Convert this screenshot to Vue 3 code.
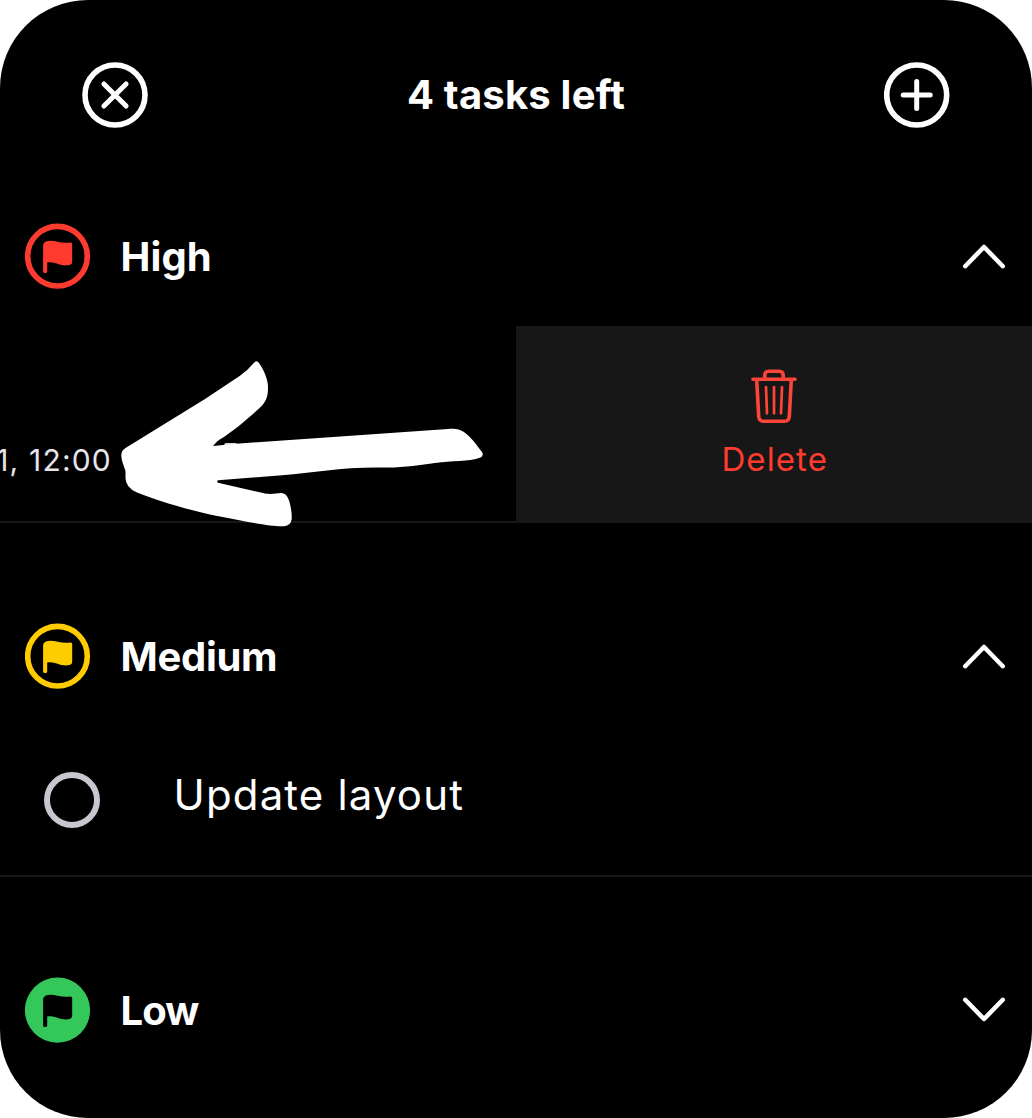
<script setup>
import { ref } from 'vue'

const flag = 'M43.1 272.3V246.2Q43.1 242.8 46 241.7C53 239 60 244.5 70.2 242.8Q72.2 242.5 72.2 244.3V261.8Q72.2 264.8 69.5 265.3C60 267.3 54.5 260.8 47.2 262.9V272.3Q47.2 273.4 45.2 273.4Q43.1 273.4 43.1 272.3Z'
const sections = ref([
  { name: 'High', color: '#ff3b30', open: true, kind: 'swiped' },
  { name: 'Medium', color: '#ffcc00', open: true, kind: 'task' },
  { name: 'Low', color: '#34c759', open: false, kind: 'none' },
])
</script>

<template>
  <main class="screen">
    <header class="topbar">
      <svg class="ring" viewBox="0 0 66 66">
        <circle cx="33" cy="33" r="30" />
        <path d="M21.9 21.9L44.1 44.1M44.1 21.9L21.9 44.1" />
      </svg>
      <h1>4 tasks left</h1>
      <svg class="ring" viewBox="0 0 66 66">
        <circle cx="32.7" cy="33" r="30" />
        <path d="M32.7 19.5V46.5M19.2 33H46.2" />
      </svg>
    </header>

    <section v-for="s in sections" :key="s.name">
      <div class="group">
        <svg class="badge" viewBox="25 223.3 66 66">
          <circle
            cx="57.5" cy="256.5" :r="s.open ? 29.8 : 32.6"
            :fill="s.open ? 'none' : s.color"
            :stroke="s.open ? s.color : 'none'" stroke-width="5.6"
          />
          <path :d="flag" :fill="s.open ? s.color : '#000'" />
        </svg>
        <h2 :class="s.name.toLowerCase()">{{ s.name }}</h2>
        <svg class="chevron" :class="{ down: !s.open }" viewBox="0 0 44 26">
          <path d="M3.2 23.2L22 4L40.8 23.2" />
        </svg>
      </div>

      <div v-if="s.kind === 'swiped'" class="swiped">
        <div class="content">
          <div class="time"><span>1, 12:00</span></div>
          <svg class="arrow" viewBox="110 350 390 190">
            <path fill="#dcdce0" d="M223 446L225.5 443H236L238 446Z" />
            <path
              fill="#fff"
              d="M125.5 448L205 399L240 375.8Q247 371 254 362.7Q256.7 359.5 259 363C265 372 268 380 268 388C268 398 265 403 259 408.5C247 419 235 430 219 440Q216 442 213 445.9L236 443.7L448 429C462 428 467 432 482 452Q484 456 480.5 457.5C468 462 452 460.5 435 463C420 465 405 467.7 385 467.5C345 466.5 315 472.5 282 475.2L218 480.3Q216.5 481.2 218 482.8L263 493C271 495 276 493 281 493C286 493 288 497 289.5 502C291 508 292 513 291.7 519Q291 525.5 284 526.2C273 527 245 521.5 216 515.8C185 509 158 501 137 492.5Q125.5 487.5 125.5 478V471.5C124.5 466.5 121.3 461.5 121.3 455Q121.3 450.5 125.5 448Z"
            />
          </svg>
        </div>
        <div class="delete">
          <svg class="trash" viewBox="0 0 48 56">
            <path d="M3 10.3H45M14.8 10V6.5Q14.800 2.2 18.8 2.2H29.2Q33.2 2.2 33.2 6.5V10" />
            <path d="M6.7 11L8.7 47.5Q9 52.300 13.5 52.3H34.5Q39 52.3 39.3 47.5L41.3 11" />
            <path class="thin" d="M16 18L17 44.3M24 18V44.3M32 18L31 44.3" />
          </svg>
          <span>Delete</span>
        </div>
      </div>

      <div v-if="s.kind === 'task'" class="task">
        <i class="check"></i>
        <span>Update layout</span>
      </div>
    </section>
  </main>
</template>

<style>
body {
  margin: 0;
  background: #fff;
}
</style>

<style scoped>
.screen {
  width: 1032px;
  height: 1118px;
  box-sizing: border-box;
  overflow: hidden;
  border-radius: 88px;
  background: #000;
  color: #fff;
  font-family: Inter, "Liberation Sans", sans-serif;
}
svg {
  display: block;
  flex: none;
}
.topbar {
  height: 190px;
  box-sizing: border-box;
  padding: 0 82px;
  display: flex;
  align-items: center;
  justify-content: space-between;
}
h1,
h2 {
  margin: 0;
  font-size: 40px;
  line-height: 48px;
  white-space: nowrap;
}
h1 {
  font-weight: 650;
  letter-spacing: 0.2px;
}
h2 {
  flex: 1;
  padding-top: 1px;
  font-weight: 700;
}
.high {
  letter-spacing: 0.1px;
  padding-top: 2px;
}
.medium {
  letter-spacing: -0.3px;
}
.low {
  letter-spacing: -0.9px;
}
.ring {
  width: 66px;
  height: 66px;
  fill: none;
  stroke: #fff;
  stroke-width: 5;
  stroke-linecap: round;
}
.ring circle {
  stroke-width: 5.6;
}
section + section {
  padding-top: 67px;
}
.group {
  height: 132px;
  display: flex;
  align-items: center;
  padding: 0 26px 0 25px;
}
.badge {
  width: 66px;
  height: 66px;
  margin-right: 29.5px;
}
.chevron {
  width: 44px;
  height: 26px;
  fill: none;
  stroke: #fff;
  stroke-width: 4.5;
  stroke-linecap: round;
  stroke-linejoin: round;
}
.chevron.down {
  transform: rotate(180deg);
}
.swiped {
  display: flex;
  height: 197px;
  margin-top: 4px;
  box-sizing: border-box;
  border-bottom: 2px solid #171717;
}
.content {
  position: relative;
  width: 516px;
}
.time {
  width: 112px;
  padding-top: 114px;
  overflow: hidden;
  display: flex;
  justify-content: flex-end;
  color: #e5e5ea;
  font-size: 30px;
  line-height: 40px;
  letter-spacing: 1.2px;
  white-space: nowrap;
}
.arrow {
  position: absolute;
  left: 110px;
  top: 24px;
  width: 390px;
  height: 190px;
}
.delete {
  flex: 1;
  background: #171717;
  display: flex;
  flex-direction: column;
  align-items: center;
  padding-top: 43px;
  color: #ff3b30;
  font-size: 33px;
  line-height: 40px;
  letter-spacing: 1.1px;
}
.delete span {
  margin: 13.5px 0 0 1.5px;
}
.trash {
  width: 48px;
  height: 56px;
  fill: none;
  stroke: #ff453a;
  stroke-width: 3.6;
  stroke-linecap: round;
  stroke-linejoin: round;
}
.trash .thin {
  stroke-width: 2.7;
}
.task {
  height: 155px;
  box-sizing: border-box;
  border-bottom: 2px solid #171717;
  display: flex;
  align-items: center;
  padding: 3px 0 0 44px;
}
.check {
  width: 56px;
  height: 56px;
  box-sizing: border-box;
  border: 6px solid #c7c7d1;
  border-radius: 50%;
}
.task span {
  margin: 0 0 10px 73.5px;
  font-size: 42px;
  line-height: 50px;
  letter-spacing: 1.15px;
  white-space: nowrap;
}
</style>
